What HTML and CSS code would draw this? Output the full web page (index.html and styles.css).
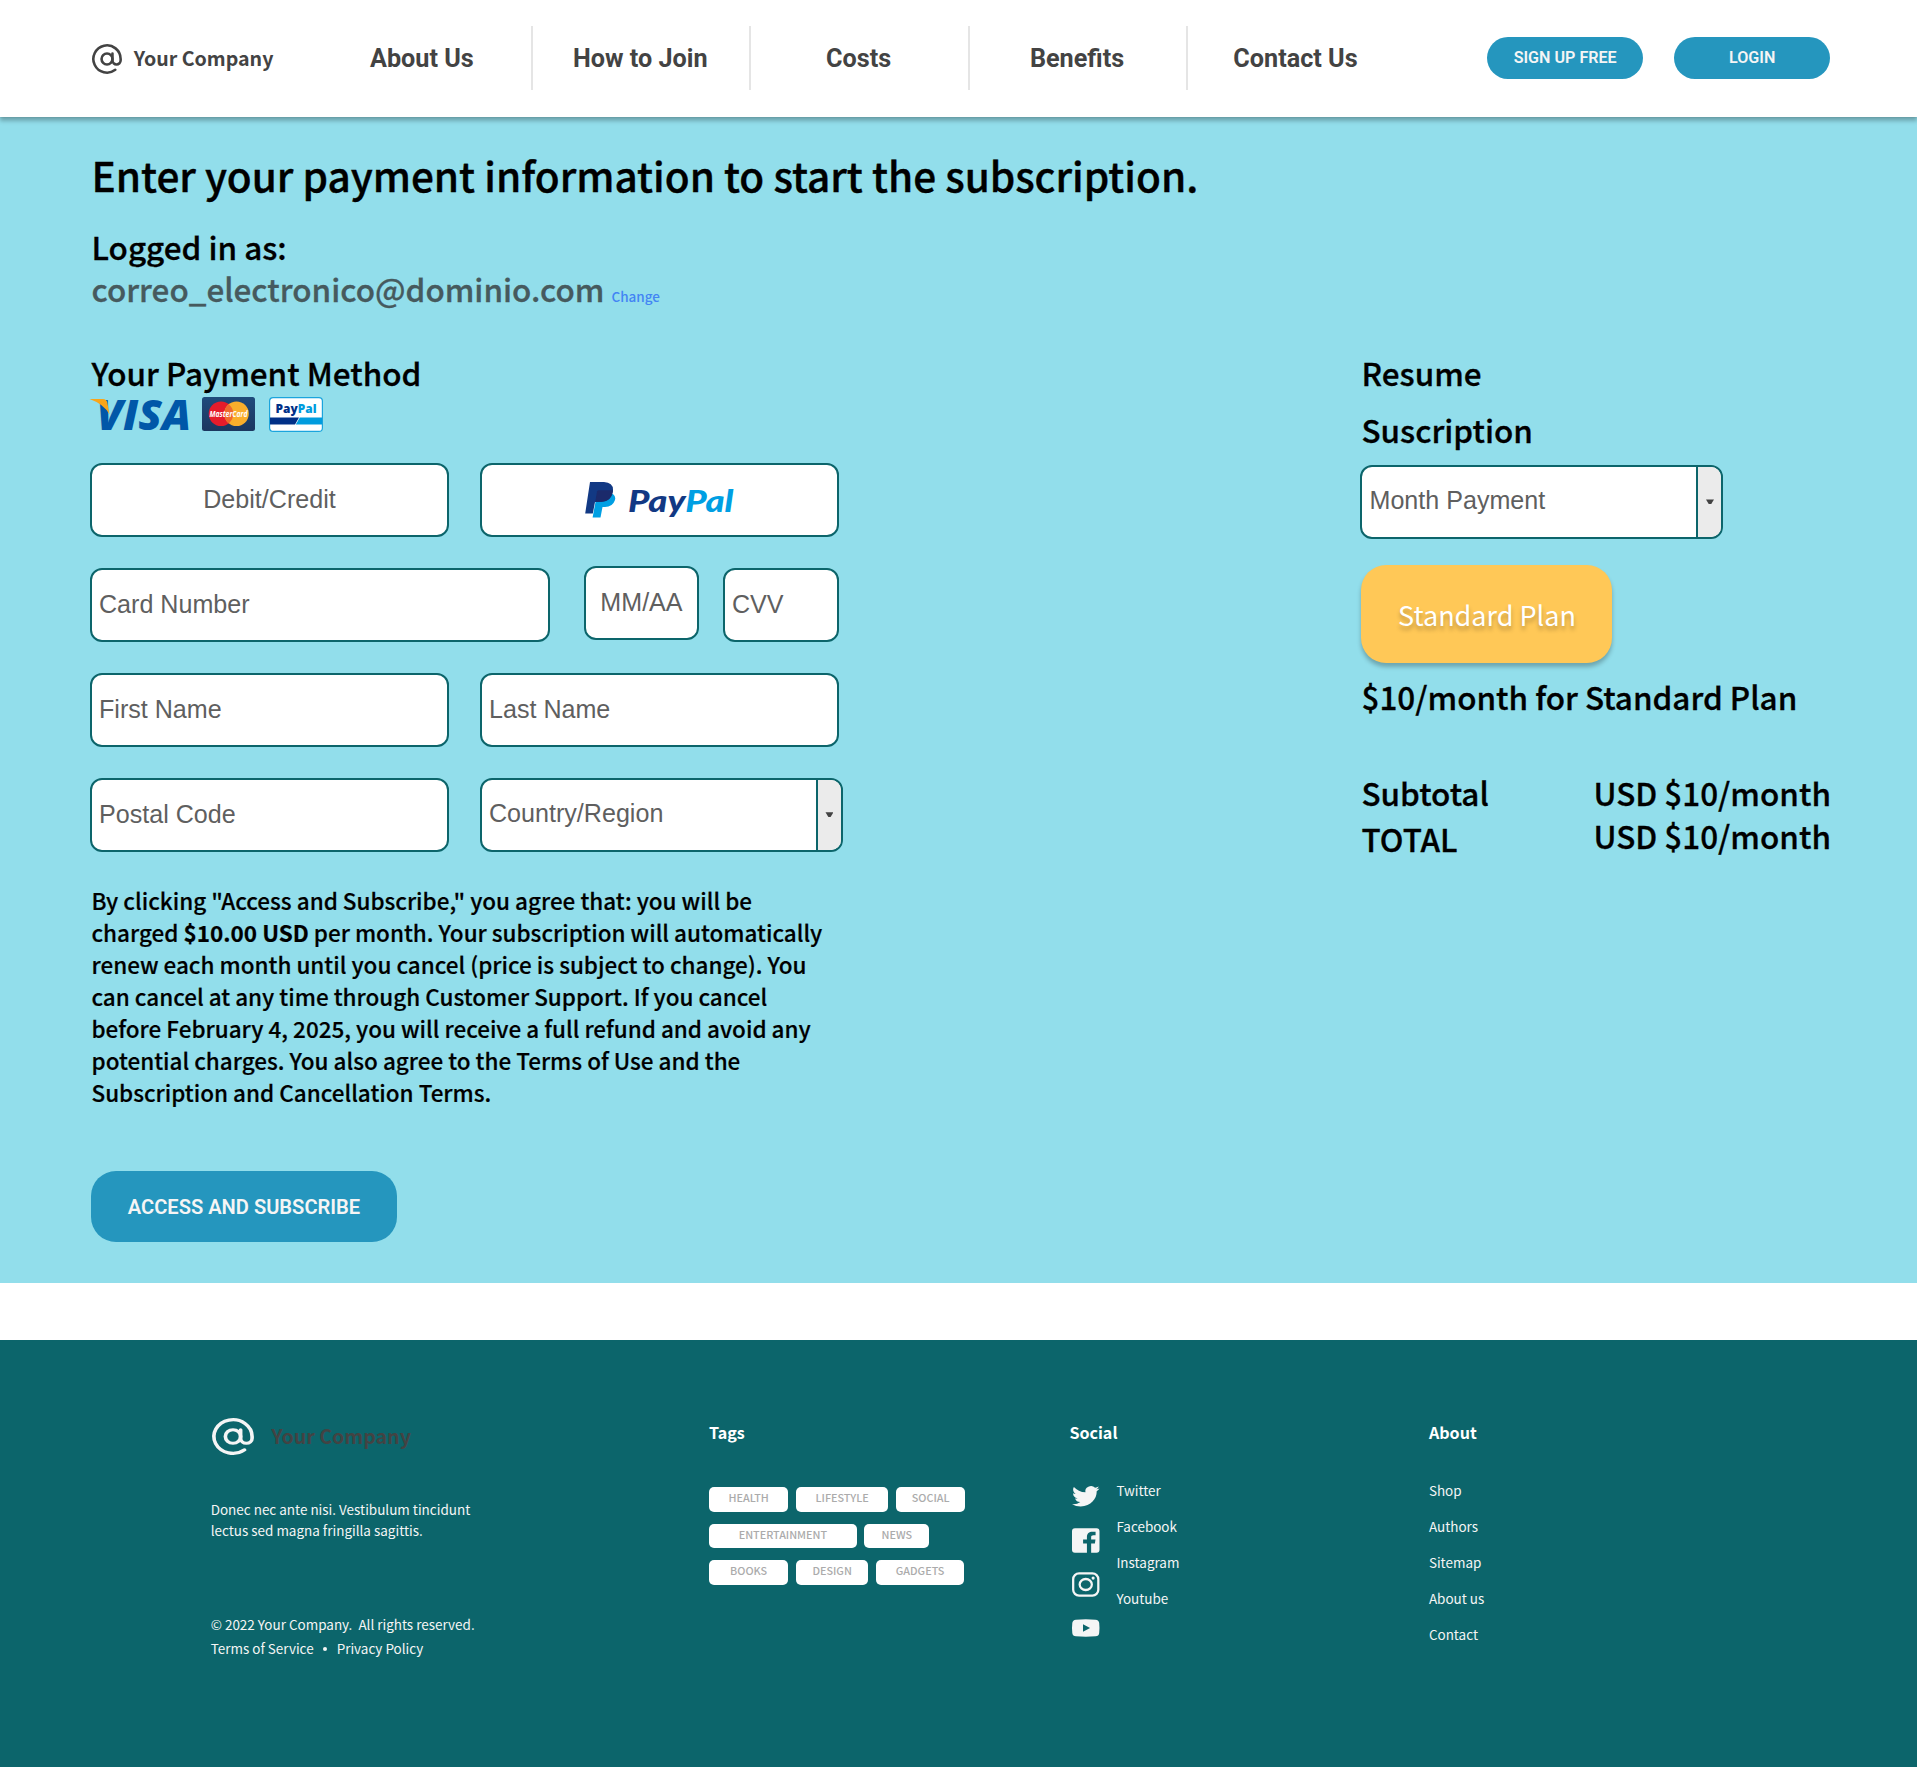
FILE: index.html
```html
<!DOCTYPE html>
<html lang="en">
<head>
<meta charset="utf-8">
<title>Your Company – Payment</title>
<link rel="stylesheet" href="styles.css">
</head>
<body>
<header class="header">
  <a class="brand">
    <svg class="brand-icon" viewBox="1 1 22 22" preserveAspectRatio="none"><circle cx="12" cy="12" r="4"/><path d="M16 8v5a3 3 0 0 0 6 0v-1a10 10 0 1 0-3.92 7.94"/></svg>
    <span>Your Company</span>
  </a>
  <nav class="nav">
    <a>About Us</a><a>How to Join</a><a>Costs</a><a>Benefits</a><a>Contact Us</a>
  </nav>
  <div class="actions">
    <button class="pill">SIGN UP FREE</button>
    <button class="pill">LOGIN</button>
  </div>
</header>

<main class="hero">
  <h1 class="title">Enter your payment information to start the subscription.</h1>
  <div class="account">
    <div>Logged in as:</div>
    <div class="account-row"><span class="email">correo_electronico@dominio.com</span><a class="change">Change</a></div>
  </div>
  <div class="columns">
    <section class="payment">
      <h2 class="heading">Your Payment Method</h2>
      <div class="cards">
        <svg class="visa" viewBox="0 0 98 34">
          <text x="5.500" y="33" textLength="94.500" lengthAdjust="spacingAndGlyphs">VISA</text>
          <path d="M-1.500 2H12Q15.500 2 16.300 5.500L18.500 17.500Q13 7 -1.500 2Z"/>
        </svg>
        <svg class="mastercard" viewBox="0 0 53 34">
          <defs><linearGradient id="navy" x1="0" y1="0" x2="0" y2="1"><stop offset="0" stop-color="#1f4b7c"/><stop offset="1" stop-color="#1b375f"/></linearGradient></defs>
          <rect width="53" height="34" rx="2.500" fill="url(#navy)"/>
          <circle cx="19" cy="16.800" r="12.300" fill="#e61c2b"/>
          <circle cx="34.500" cy="16.800" r="12.300" fill="#f9ae2b"/>
          <path d="M26.750 7.200a12.300 12.300 0 0 1 0 19.200a12.300 12.300 0 0 1 0-19.200z" fill="#ef6a2c"/>
          <text x="7.500" y="19.800" textLength="38" lengthAdjust="spacingAndGlyphs">MasterCard</text>
        </svg>
        <svg class="paypal-card" viewBox="0 0 54 35">
          <rect x=".6" y=".6" width="52.800" height="33.800" rx="3.500" fill="#fff" stroke="#1ba4dd" stroke-width="1.200"/>
          <path d="M1 20.500H30L26 27.500H1z" fill="#003087"/>
          <path d="M30.800 20.500H53V27.500H26.800z" fill="#009cde"/>
          <text x="6.500" y="15.800" textLength="41" lengthAdjust="spacingAndGlyphs"><tspan fill="#003087">Pay</tspan><tspan fill="#009cde">Pal</tspan></text>
        </svg>
      </div>
      <div class="form">
        <div class="row">
          <div class="field center">Debit/Credit</div>
          <div class="field center">
            <svg class="paypal" viewBox="0 0 149 36">
              <path d="M12 12H27.900Q31.300 14.500 29.800 18.500Q27.500 25 20 25H17.500L15.500 35.500H7.600z" fill="#009fe3"/>
              <path d="M5 0H19Q29 .5 27.900 9.500Q26.500 19.500 16 20H10L7.800 31.500H0.200z" fill="#123984"/>
              <path d="M12 9.500Q12.400 8.300 14 8.300H27.900Q26.800 19.500 16 19.800H10.300z" fill="#1b2a6b"/>
              <text x="43" y="30.300" textLength="105.500" lengthAdjust="spacingAndGlyphs"><tspan fill="#123984">Pay</tspan><tspan fill="#009fe3">Pal</tspan></text>
            </svg>
          </div>
        </div>
        <div class="row card-row">
          <div class="field number">Card Number</div>
          <div class="field expiry center">MM/AA</div>
          <div class="field cvv">CVV</div>
        </div>
        <div class="row">
          <div class="field">First Name</div>
          <div class="field">Last Name</div>
        </div>
        <div class="row">
          <div class="field">Postal Code</div>
          <div class="select"><span>Country/Region</span><i class="arrow"></i></div>
        </div>
      </div>
      <p class="terms">By clicking "Access and Subscribe," you agree that: you will be<br>charged <b>$10.00 USD</b> per month. Your subscription will automatically<br>renew each month until you cancel (price is subject to change). You<br>can cancel at any time through Customer Support. If you cancel<br>before February 4, 2025, you will receive a full refund and avoid any<br>potential charges. You also agree to the Terms of Use and the<br>Subscription and Cancellation Terms.</p>
      <button class="subscribe">ACCESS AND SUBSCRIBE</button>
    </section>

    <aside class="resume">
      <h2 class="heading">Resume</h2>
      <h2 class="heading sub">Suscription</h2>
      <div class="select"><span>Month Payment</span><i class="arrow"></i></div>
      <button class="plan">Standard Plan</button>
      <div class="heading price">$10/month for Standard Plan</div>
      <div class="totals">
        <div class="labels"><span>Subtotal</span><span>TOTAL</span></div>
        <div class="amounts"><span>USD $10/month</span><span>USD $10/month</span></div>
      </div>
    </aside>
  </div>
</main>

<footer class="footer">
  <section class="about-company">
    <div class="brand footer-brand">
      <svg class="brand-icon" viewBox="1 1 22 22" preserveAspectRatio="none"><circle cx="12" cy="12" r="4"/><path d="M16 8v5a3 3 0 0 0 6 0v-1a10 10 0 1 0-3.920 7.940"/></svg>
      <span>Your Company</span>
    </div>
    <p class="blurb">Donec nec ante nisi. Vestibulum tincidunt<br>lectus sed magna fringilla sagittis.</p>
    <div class="legal">
      <div>© 2022 Your Company.&nbsp; All rights reserved.</div>
      <div class="legal-links"><a>Terms of Service</a><i class="dot"></i><a>Privacy Policy</a></div>
    </div>
  </section>
  <section class="tags-column">
    <h3>Tags</h3>
    <div class="tags">
      <div><span class="w80">HEALTH</span><span class="w93">LIFESTYLE</span><span class="w70">SOCIAL</span></div>
      <div><span class="w148">ENTERTAINMENT</span><span class="w65">NEWS</span></div>
      <div><span class="w80">BOOKS</span><span class="w73">DESIGN</span><span class="w88">GADGETS</span></div>
    </div>
  </section>
  <section class="social-column">
    <h3>Social</h3>
    <div class="social">
      <div class="icons">
        <svg class="tw" viewBox="0 2.200 24 19.600" preserveAspectRatio="none"><path d="M23.953 4.570a10 10 0 01-2.825.775 4.958 4.958 0 002.163-2.723c-.951.555-2.005.959-3.127 1.184a4.920 4.920 0 00-8.384 4.482C7.690 8.095 4.067 6.130 1.640 3.162a4.822 4.822 0 00-.666 2.475c0 1.710.870 3.213 2.188 4.096a4.904 4.904 0 01-2.228-.616v.060a4.923 4.923 0 003.946 4.827 4.996 4.996 0 01-2.212.085 4.936 4.936 0 004.604 3.417 9.867 9.867 0 01-6.102 2.105c-.390 0-.779-.023-1.170-.067a13.995 13.995 0 007.557 2.209c9.053 0 13.998-7.496 13.998-13.985 0-.210 0-.420-.015-.630A9.935 9.935 0 0024 4.590z"/></svg>
        <svg class="fb" viewBox="0 0 28 25"><path d="M3 0H25a3 3 0 0 1 3 3V22a3 3 0 0 1-3 3H19.500V15.500H23.300L23.900 11.500H19.500V9.200C19.500 7.900 20.200 7.200 21.800 7.200H24V3.700C23.400 3.600 22.200 3.500 20.800 3.500C17.400 3.500 15.200 5.400 15.200 8.700V11.500H11.300V15.500H15.200V25H3a3 3 0 0 1-3-3V3a3 3 0 0 1 3-3z"/></svg>
        <svg class="ig" viewBox="0 0 28 25"><rect x="1.200" y="1.200" width="25.600" height="22.600" rx="6"/><ellipse cx="14" cy="12.500" rx="6.200" ry="5.600"/><circle class="solid" cx="21.500" cy="6" r="1.600"/></svg>
        <svg class="yt" viewBox="0 0 28 18"><path fill-rule="evenodd" d="M4 .500Q14-.500 24 .500Q27.300.800 27.700 4Q28.300 9 27.700 14Q27.300 17.200 24 17.500Q14 18.500 4 17.500Q.700 17.200.300 14Q-.300 9 .300 4Q.700.800 4 .500zM11.200 5.200V12.800L18.400 9z"/></svg>
      </div>
      <div class="links"><a>Twitter</a><a>Facebook</a><a>Instagram</a><a>Youtube</a></div>
    </div>
  </section>
  <section class="about-column">
    <h3>About</h3>
    <div class="links"><a>Shop</a><a>Authors</a><a>Sitemap</a><a>About us</a><a>Contact</a></div>
  </section>
</footer>
</body>
</html>
```
FILE: styles.css
```css
* { box-sizing: border-box; }
body {
  margin: 0;
  height: 1767px;
  display: flex;
  flex-direction: column;
  background: #fff;
  color: #000;
  font-family: "Noto Sans CJK JP", "Noto Sans", sans-serif;
}
h1, h2, h3, p { margin: 0; font-weight: 500; }
button { border: 0; padding: 0; font-family: Roboto, sans-serif; font-weight: 600; color: #f5f5f5; background: #2596be; }
svg { display: block; flex: none; overflow: visible; }

/* Header */
.header {
  position: relative;
  height: 116.500px;
  flex: none;
  margin-left: .4px;
  padding-left: 91.300px;
  display: flex;
  align-items: center;
  background: #fff;
  box-shadow: 0 4px 4px rgba(0, 0, 0, .25), 0 0 2px rgba(0, 0, 0, .15);
}
.brand { display: flex; align-items: center; gap: 12px; width: 223px; font-size: 19.600px; font-weight: 700; line-height: 30px; color: #434343; white-space: nowrap; }
.brand-icon { width: 30px; height: 30px; fill: none; stroke: currentColor; stroke-width: 1.900; stroke-linecap: round; stroke-linejoin: round; }
.header .brand { padding-top: 2px; }
.header .brand span { margin-top: -2px; }
.nav { display: flex; height: 64px; }
.nav a { width: 218.400px; border-right: 2px solid #e5e5e5; display: flex; align-items: center; justify-content: center; padding: 1px 2px 0 0; font: 700 25.200px Roboto, sans-serif; color: #434343; }
.nav a:last-child { border-color: transparent; }
.actions { display: flex; gap: 31px; margin-left: 80.500px; }
.pill { width: 156px; height: 42px; border-radius: 21px; font-size: 16.130px; line-height: 42px; }

/* Payment page */
.hero { flex: none; height: 1166px; margin-left: .4px; padding: 29.500px 0 0 91.100px; background: #92deeb; }
.title { font-size: 40.500px; line-height: 58px; -webkit-text-stroke: .4px #000; }
.account { margin-top: 22.300px; font-size: 31.450px; font-weight: 500; line-height: 42px; -webkit-text-stroke: .3px currentColor; }
.account-row { display: flex; align-items: baseline; gap: 7px; height: 42px; }
.email { color: #465a5e; }
.change { font-size: 13.500px; line-height: 20px; color: #4285f4; -webkit-text-stroke: 0; }
.columns { display: flex; margin-top: 42px; }
.payment { width: 1270px; }
.heading { font-size: 31.450px; font-weight: 500; line-height: 42px; -webkit-text-stroke: .3px #000; }
.cards { display: flex; margin: 2.500px 0 31px; height: 35px; }
.visa { width: 98px; height: 34px; }
.visa text { font: italic 800 43px "Open Sans", sans-serif; fill: #0057a8; }
.visa path { fill: #f9a51a; }
.mastercard { width: 53px; height: 34px; margin-left: 13px; }
.mastercard text { font: italic 700 8px "Open Sans", sans-serif; fill: #fff; }
.paypal-card { width: 54px; height: 35px; margin-left: 13.500px; }
.paypal-card text { font: 800 13px "Open Sans", sans-serif; }
.form { display: flex; flex-direction: column; gap: 31px; margin-left: -1.500px; }
.row { display: flex; gap: 31px; }
.field, .select {
  width: 359px;
  height: 74px;
  border: 2px solid #0c656b;
  border-radius: 12px;
  background: #fff;
  color: #5f5f5f;
  font: 25.100px/68px "Liberation Sans", Arial, sans-serif;
}
.field { padding-left: 7px; }
.center { display: flex; justify-content: center; padding: 0; line-height: 68px; }
.number { width: 460px; }
.card-row { gap: 0; }
.expiry { width: 115px; margin: -2px 24px 2px 34px; }
.cvv { width: 116px; }
.paypal { width: 149px; height: 36px; margin: 17px 0 0 1px; }
.paypal text { font: italic 900 31px Lato, sans-serif; }
.select { width: 363px; display: flex; justify-content: space-between; padding-left: 7px; line-height: 67px; overflow: hidden; }
.arrow { width: 25px; border-left: 2px solid #0c656b; background: #ebebeb; display: flex; align-items: center; justify-content: center; }
.arrow::before { content: ""; width: 8px; height: 5px; background: #434343; clip-path: polygon(0 0, 100% 0, 62% 100%, 38% 100%); }
.terms { margin-top: 32px; font-size: 22.470px; line-height: 32px; white-space: nowrap; -webkit-text-stroke: .2px #000; }
.subscribe { display: block; margin: 63.500px 0 0 -.5px; width: 306px; height: 71px; border-radius: 25px; font-size: 20.100px; line-height: 70px; }
.resume { width: 480px; }
.sub { margin-top: 14.600px; }
.resume .select { margin: 14px 0 0 -1px; }
.plan { display: block; margin-top: 26.500px; width: 251px; height: 98px; border-radius: 25px; background: #ffc857; color: #fff; font: 400 27px/99px "Noto Sans CJK JP", sans-serif; box-shadow: 0 4px 4px rgba(0, 0, 0, .25); text-shadow: 0 4px 4px rgba(0, 0, 0, .25); }
.price { margin-top: 12.800px; }
.totals { display: flex; margin-top: 53.500px; font-size: 31.450px; font-weight: 500; line-height: 42px; -webkit-text-stroke: .3px #000; }
.labels, .amounts { display: flex; flex-direction: column; gap: 4px; }
.labels { width: 232px; }
.amounts { gap: 1px; }

/* Footer */
.footer { flex: 1; margin: 57px 0 0 .4px; padding-left: 210.300px; display: flex; background: #0c656b; color: #f5f5f5; font-size: 13.470px; }
.footer h3 { padding-top: 80px; font-size: 16.100px; font-weight: 700; line-height: 24px; color: #fff; }
.about-company { width: 498.200px; padding-top: 77.500px; }
.footer-brand { gap: 17px; padding-left: 1.500px; line-height: 38px; }
.footer-brand .brand-icon { width: 42px; height: 37px; color: #f5f5f5; }
.blurb { margin-top: 44px; font-weight: 400; line-height: 21px; }
.legal { margin-top: 71px; line-height: 24px; }
.legal-links { display: flex; align-items: center; }
.dot { width: 4px; height: 4px; border-radius: 50%; margin: 2px 9.500px 0; background: #f5f5f5; }
.tags-column { width: 360.500px; }
.tags { padding-top: 43.500px; display: flex; flex-direction: column; gap: 12px; }
.tags div { display: flex; gap: 7.500px; }
.tags span { height: 24.500px; border-radius: 5px; background: #fff; color: #ababab; font-size: 10.800px; font-weight: 500; line-height: 21px; text-align: center; }
.w65 { width: 65px; } .w70 { width: 69.500px; } .w73 { width: 72.500px; } .w80 { width: 79.500px; }
.w88 { width: 88.500px; } .w93 { width: 92.500px; } .w148 { width: 148px; }
.social-column { width: 359.500px; }
.social { display: flex; gap: 16px; }
.icons { width: 31px; padding: 42px 0 0 3px; }
.icons svg { width: 27.500px; fill: #f5f5f5; }
.tw { height: 20.500px; }
.fb { height: 25px; margin-top: 21.500px; }
.ig { height: 25px; margin-top: 19px; }
.icons .ig { fill: none; stroke: #f5f5f5; stroke-width: 2.300; }
.ig .solid { fill: #f5f5f5; stroke: none; }
.yt { height: 18px; margin-top: 22px; }
.links { display: flex; flex-direction: column; padding-top: 28px; line-height: 36px; }
```
